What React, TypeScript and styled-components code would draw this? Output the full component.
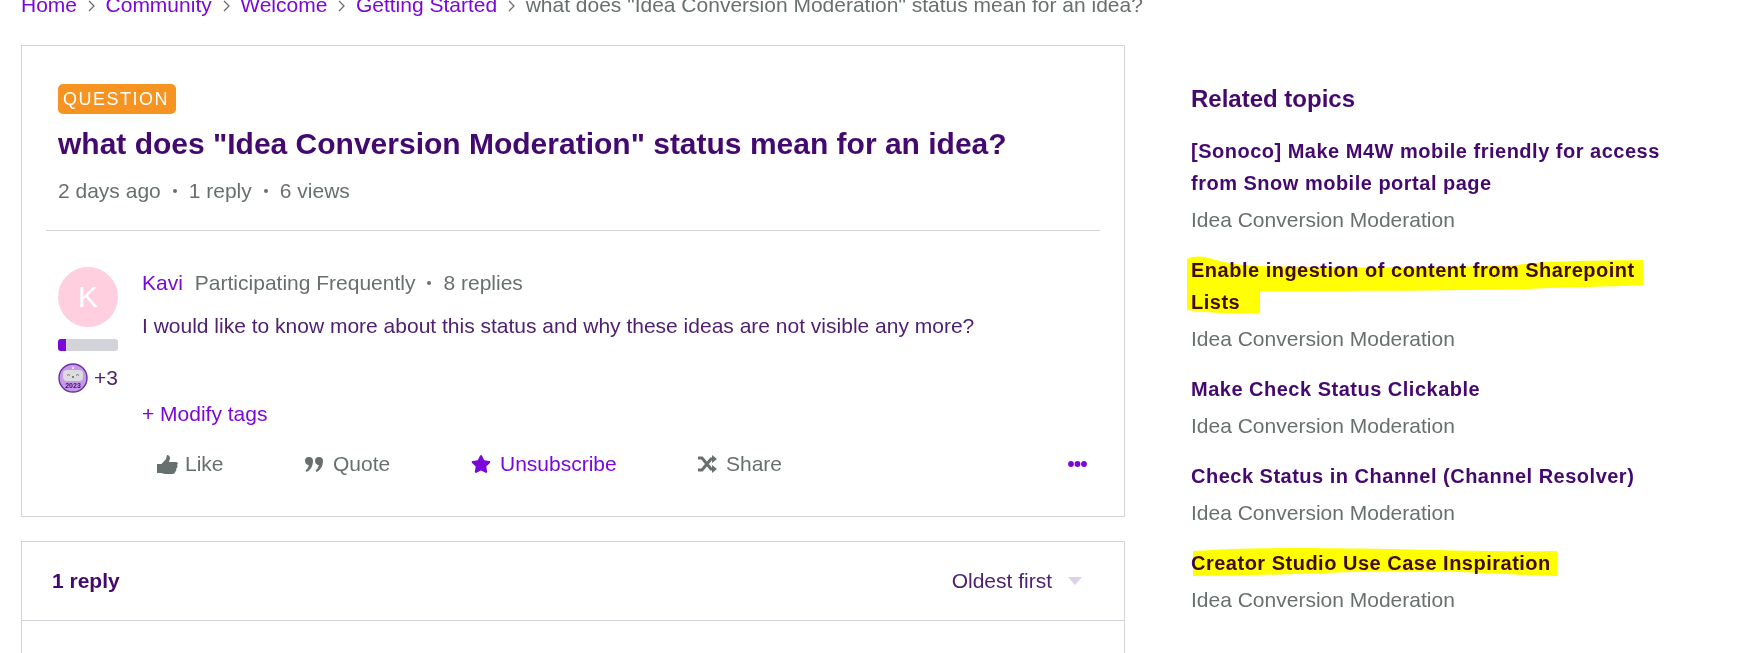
import styled, { createGlobalStyle } from 'styled-components';
import { FaStar } from 'react-icons/fa';

const GlobalStyle = createGlobalStyle`
  html, body {
    margin: 0;
    height: 653px;
    overflow: hidden;
    background: #fff;
    font-family: "Liberation Sans", Arial, sans-serif;
  }
`;

const Page = styled.div`
  display: flex;
  height: 653px;
  overflow: hidden;
  padding-left: 21px;
`;

const Main = styled.main`
  width: 1104px;
  flex: none;
`;

const Breadcrumb = styled.nav`
  display: flex;
  align-items: center;
  height: 24px;
  margin-top: -7px;
  margin-bottom: 28px;
  font-size: 21px;
  white-space: nowrap;
  color: #68706f;
`;

const Crumb = styled.a`
  color: #7a08d8;
`;

const Chevron = styled.svg`
  flex: none;
  width: 7px;
  height: 12px;
  margin: 2px 10.5px 0 11px;
  fill: none;
  stroke: #68706f;
  stroke-width: 1.3;
`;

const Card = styled.section`
  border: 1px solid #d3d3da;
  background: #fff;
`;

const PostHead = styled.header`
  padding: 38px 36px 0;
`;

const Badge = styled.span`
  display: inline-block;
  height: 30px;
  line-height: 30px;
  padding: 0 7px 0 5px;
  border-radius: 5px;
  background: #f79421;
  color: #fff;
  font-size: 18px;
  letter-spacing: 1.5px;
`;

const Title = styled.h1`
  margin: 0;
  padding-top: 10px;
  font-size: 30px;
  line-height: 40px;
  font-weight: 700;
  color: #44096f;
`;

const Meta = styled.div`
  display: flex;
  align-items: center;
  margin-top: 14px;
  font-size: 21px;
  line-height: 26px;
  color: #68706f;
`;

const Dot = styled.span`
  width: 4px;
  height: 4px;
  margin: 0 12px;
  border-radius: 50%;
  background: #68706f;
`;

const Divider = styled.hr`
  margin: 26px 24px 0;
  border: 0;
  border-top: 1px solid #d3d3da;
`;

const PostBody = styled.div`
  display: flex;
  padding: 36px 36px 0;
  gap: 24px;
`;

const Author = styled.aside`
  width: 60px;
  flex: none;
`;

const Avatar = styled.div`
  display: flex;
  align-items: center;
  justify-content: center;
  width: 60px;
  height: 60px;
  border-radius: 50%;
  background: #ffcfe0;
  color: #fff;
  font-size: 30px;
`;

const Rank = styled.div`
  height: 12px;
  margin-top: 12px;
  border-radius: 3px;
  background: #d3d3da;
  overflow: hidden;
`;

const RankFill = styled.div`
  width: 8px;
  height: 100%;
  background: #7a08d8;
`;

const Awards = styled.div`
  display: flex;
  align-items: center;
  gap: 6px;
  margin-top: 12px;
  font-size: 21px;
  color: #4f2170;
`;

const Content = styled.div`
  flex: 1;
  min-width: 0;
`;

const Byline = styled.div`
  display: flex;
  align-items: center;
  height: 32px;
  font-size: 21px;
  color: #68706f;
`;

const AuthorName = styled.a`
  margin-right: 12px;
  color: #7a08d8;
`;

const Text = styled.p`
  margin: 11px 0 0;
  font-size: 21px;
  line-height: 32px;
  color: #4f2170;
`;

const ModifyTags = styled.a`
  display: block;
  margin-top: 56px;
  font-size: 21px;
  line-height: 32px;
  color: #7a08d8;
`;

const Actions = styled.div`
  display: flex;
  align-items: center;
  height: 32px;
  margin-top: 18px;
  padding-left: 15px;
`;

const Action = styled.a<{ $active?: boolean; $width: number; $gap: number }>`
  display: flex;
  align-items: center;
  gap: ${p => p.$gap}px;
  width: ${p => p.$width}px;
  font-size: 21px;
  color: ${p => (p.$active ? '#7a08d8' : '#68706f')};
`;

const Glyph = styled.svg`
  flex: none;
  fill: currentColor;
`;

const More = styled.a`
  display: flex;
  margin-left: auto;
  margin-right: 1px;
  color: #7a08d8;
`;

const ActionsPad = styled.div`
  height: 36px;
`;

const Replies = styled(Card)`
  margin-top: 24px;
  height: 200px;
`;

const RepliesBar = styled.div`
  display: flex;
  align-items: center;
  justify-content: space-between;
  height: 78px;
  padding: 0 42px 0 30px;
  border-bottom: 1px solid #d3d3da;
`;

const RepliesCount = styled.strong`
  font-size: 21px;
  color: #44096f;
`;

const Sort = styled.div`
  display: flex;
  align-items: center;
  gap: 16px;
  font-size: 21px;
  color: #4f2170;
`;

const Caret = styled.span`
  width: 0;
  height: 0;
  border-left: 7px solid transparent;
  border-right: 7px solid transparent;
  border-top: 8px solid #dcd0ec;
`;

const Sidebar = styled.aside`
  width: 480px;
  margin-left: 66px;
  padding-top: 82px;
`;

const SideTitle = styled.h2`
  margin: 0 0 19px;
  font-size: 24px;
  line-height: 34px;
  font-weight: 700;
  color: #44096f;
`;

const Topic = styled.div`
  margin-bottom: 19px;
`;

const TopicTitle = styled.a`
  position: relative;
  display: block;
  font-size: 20px;
  line-height: 32px;
  font-weight: 700;
  letter-spacing: 0.5px;
  color: #44096f;
`;

const TopicMeta = styled.div`
  margin-top: 6px;
  font-size: 21px;
  line-height: 30px;
  color: #68706f;
`;

const Marker = styled.svg`
  position: absolute;
  left: -4px;
  top: 0;
  fill: #ffff00;
  mix-blend-mode: multiply;
  pointer-events: none;
`;

const topics = [
  { title: '[Sonoco] Make M4W mobile friendly for access from Snow mobile portal page' },
  {
    title: 'Enable ingestion of content from Sharepoint Lists',
    marker: {
      width: 458,
      height: 62,
      d: 'M0 5 C6 2 14 2 22 4 C34 8 50 11 70 12 C150 14 250 14 330 11 C350 8 370 7 456 6 L456 31 C420 33 380 33 340 35 C250 37 160 37 73 37 L73 59 C50 60 20 59 0 56 Z',
    },
  },
  { title: 'Make Check Status Clickable' },
  { title: 'Check Status in Channel (Channel Resolver)' },
  {
    title: 'Creator Studio Use Case Inspiration',
    marker: {
      width: 370,
      height: 32,
      d: 'M6 4 C60 0 120 1 200 2 C250 3 320 5 370 4 L370 29 C330 28 290 25 240 24 C170 23 90 29 6 29 Z',
    },
  },
];

function Medal() {
  return (
    <svg width="30" height="30" viewBox="0 0 30 30">
      <circle cx="15" cy="15" r="14" fill="#c59ae8" stroke="#6a2fa0" strokeWidth="1.4" />
      <circle cx="15" cy="5" r="1.2" fill="#efe4fa" />
      <rect x="5" y="7" width="20" height="11" rx="4" fill="#dcdce0" />
      <path d="M9 12.5l1.5-1 1.5 1M18 12.5l1.5-1 1.5 1" fill="none" stroke="#555" strokeWidth="0.8" />
      <circle cx="15" cy="14" r="0.9" fill="#555" />
      <text x="15" y="25" fontSize="7" fontWeight="700" textAnchor="middle" fill="#44096f" fontFamily="Liberation Sans">
        2023
      </text>
    </svg>
  );
}

function ThumbIcon() {
  return (
    <Glyph width="21" height="19" viewBox="0 0 21 19">
      <path d="M0 9h4.500L9 4l1-4c2 0 3 1.500 3 3.500L12 7h7c2 0 2.500 2 1 3 1 1 .5 3-.8 3.500.5 1.500-.2 3-1.200 3.500 0 1.200-1 2-2.500 2H8c-1.500 0-2.500-.8-3.500-1H0z" />
    </Glyph>
  );
}

function QuoteIcon() {
  return (
    <Glyph width="18" height="15" viewBox="0 0 18 15">
      <path d="M0 4a4 4 0 1 1 8 0c0 5-2.500 9-6.500 11L.5 13.500C2.500 12 3.500 10.200 3.700 8 1.500 8 0 6.300 0 4zM10 4a4 4 0 1 1 8 0c0 5-2.500 9-6.500 11l-1-1.500c2-1.500 3-3.300 3.200-5.500C11.500 8 10 6.300 10 4z" />
    </Glyph>
  );
}

function ShuffleIcon() {
  return (
    <Glyph width="19" height="18" viewBox="0 0 19 18">
      <path d="M0 3h4l9 11h2M0 15h4l9-11h2" fill="none" stroke="currentColor" strokeWidth="3" />
      <path d="M14 0l5 4-5 4zM14 10l5 4-5 4z" />
    </Glyph>
  );
}

function DotsIcon() {
  return (
    <Glyph width="19" height="6" viewBox="0 0 19 6">
      <circle cx="3" cy="3" r="2.900" />
      <circle cx="9.500" cy="3" r="2.900" />
      <circle cx="16" cy="3" r="2.900" />
    </Glyph>
  );
}

export default function App() {
  const crumbs = ['Home', 'Community', 'Welcome', 'Getting Started'];
  return (
    <>
      <GlobalStyle />
      <Page>
        <Main>
          <Breadcrumb>
            {crumbs.map(c => (
              <span key={c} style={{ display: 'contents' }}>
                <Crumb>{c}</Crumb>
                <Chevron viewBox="0 0 7 12">
                  <path d="M1 1l5 5-5 5" />
                </Chevron>
              </span>
            ))}
            what does "Idea Conversion Moderation" status mean for an idea?
          </Breadcrumb>

          <Card>
            <PostHead>
              <Badge>QUESTION</Badge>
              <Title>what does "Idea Conversion Moderation" status mean for an idea?</Title>
              <Meta>
                2 days ago
                <Dot />1 reply
                <Dot />6 views
              </Meta>
            </PostHead>
            <Divider />
            <PostBody>
              <Author>
                <Avatar>K</Avatar>
                <Rank>
                  <RankFill />
                </Rank>
                <Awards>
                  <Medal />
                  +3
                </Awards>
              </Author>
              <Content>
                <Byline>
                  <AuthorName>Kavi</AuthorName>
                  Participating Frequently
                  <Dot />8 replies
                </Byline>
                <Text>I would like to know more about this status and why these ideas are not visible any more?</Text>
                <ModifyTags>+ Modify tags</ModifyTags>
                <Actions>
                  <Action $width={148} $gap={7}>
                    <ThumbIcon />
                    Like
                  </Action>
                  <Action $width={166} $gap={10}>
                    <QuoteIcon />
                    Quote
                  </Action>
                  <Action $active $width={227} $gap={9}>
                    <FaStar size={20} />
                    Unsubscribe
                  </Action>
                  <Action $width={160} $gap={9}>
                    <ShuffleIcon />
                    Share
                  </Action>
                  <More>
                    <DotsIcon />
                  </More>
                </Actions>
                <ActionsPad />
              </Content>
            </PostBody>
          </Card>

          <Replies>
            <RepliesBar>
              <RepliesCount>1 reply</RepliesCount>
              <Sort>
                Oldest first
                <Caret />
              </Sort>
            </RepliesBar>
          </Replies>
        </Main>

        <Sidebar>
          <SideTitle>Related topics</SideTitle>
          {topics.map(t => (
            <Topic key={t.title}>
              <TopicTitle>
                {t.title}
                {t.marker && (
                  <Marker width={t.marker.width} height={t.marker.height} viewBox={`0 0 ${t.marker.width} ${t.marker.height}`}>
                    <path d={t.marker.d} />
                  </Marker>
                )}
              </TopicTitle>
              <TopicMeta>Idea Conversion Moderation</TopicMeta>
            </Topic>
          ))}
        </Sidebar>
      </Page>
    </>
  );
}
